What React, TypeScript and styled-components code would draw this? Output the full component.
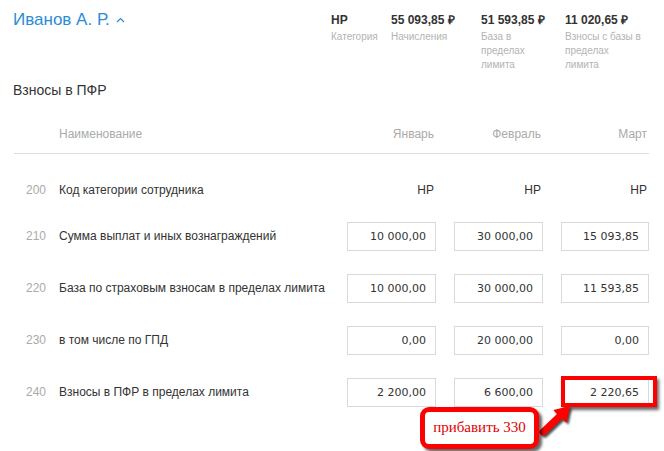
import React from "react";
import styled, { createGlobalStyle } from "styled-components";

const Global = createGlobalStyle`
  html, body { margin: 0; padding: 0; background: #fff; }
  body { font-family: "Liberation Sans", Arial, sans-serif; color: #333; }
`;

const Page = styled.div`
  padding: 9px 15px 0 13px;
  width: 664px;
  height: 451px;
  box-sizing: border-box;
  overflow: hidden;
`;

const Header = styled.div`
  display: flex;
  justify-content: space-between;
  align-items: flex-start;
`;

const Title = styled.div`
  display: flex;
  align-items: center;
  gap: 6px;
  font-size: 17px;
  line-height: 22px;
  color: #2b8cd6;
`;

const Stats = styled.div`
  display: flex;
  margin-top: 3px;
`;

const Stat = styled.div<{ $w: number }>`
  width: ${(p) => p.$w}px;
`;

const StatValue = styled.div`
  font-weight: bold;
  font-size: 12px;
  line-height: 16px;
  color: #333;
  white-space: nowrap;
`;

const StatLabel = styled.div<{ $max: number }>`
  margin-top: 2px;
  font-size: 10px;
  line-height: 14px;
  color: #b3b3b3;
  max-width: ${(p) => p.$max}px;
`;

const SectionTitle = styled.div`
  margin-top: 9px;
  font-size: 14px;
  line-height: 18px;
  color: #333;
`;

const Table = styled.div`
  margin-top: 15px;
  margin-left: 1px;
`;

const HeadRow = styled.div`
  display: flex;
  align-items: center;
  height: 39px;
  border-bottom: 1px solid #dcdcdc;
  color: #aaa;
  font-size: 12px;
`;

const Body = styled.div`
  padding-top: 16px;
`;

const Row = styled.div<{ $h: number }>`
  display: flex;
  align-items: center;
  height: ${(p) => p.$h}px;
  font-size: 12px;
`;

const Num = styled.div`
  width: 32px;
  text-align: right;
  color: #aaa;
`;

const Name = styled.div<{ $muted?: boolean }>`
  flex: 1;
  margin-left: 13px;
  color: ${(p) => (p.$muted ? "#aaa" : "#333")};
`;

const Cell = styled.div<{ $w: number }>`
  position: relative;
  width: ${(p) => p.$w}px;
  margin-left: 18px;
  display: flex;
  justify-content: flex-end;
`;

const CellText = styled.span<{ $muted?: boolean }>`
  padding-right: 2px;
  color: ${(p) => (p.$muted ? "#aaa" : "#333")};
`;

const ValueBox = styled.div`
  width: 100%;
  height: 29px;
  box-sizing: border-box;
  border: 1px solid #d9d9d9;
  padding-right: 9px;
  display: flex;
  align-items: center;
  justify-content: flex-end;
  font-family: "DejaVu Sans", Verdana, sans-serif;
  font-size: 11px;
  color: #333;
`;

const Highlight = styled.div`
  position: absolute;
  left: 0px;
  right: -8px;
  top: -2px;
  bottom: 0;
  border: 4px solid #ff0000;
  box-shadow: 2px 3px 3px rgba(0, 0, 0, 0.6);
  pointer-events: none;
`;

const Callout = styled.div`
  position: absolute;
  left: -141px;
  top: 29px;
  width: 119px;
  height: 42px;
  box-sizing: border-box;
  border: 5px solid #ff0000;
  border-radius: 9px;
  background: #fff;
  box-shadow: 3px 3px 3px rgba(0, 0, 0, 0.6);
  display: flex;
  align-items: center;
  justify-content: center;
  font-family: "Liberation Serif", "Times New Roman", serif;
  font-size: 15px;
  color: #e00000;
  white-space: nowrap;
`;

const ArrowSvg = styled.svg`
  position: absolute;
  left: -21px;
  top: 25px;
  overflow: visible;
  filter: drop-shadow(2px 2px 1px rgba(0, 0, 0, 0.7));
`;

const Caret = () => (
  <svg width="9" height="6" viewBox="0 0 9 6">
    <path d="M1 5 L4.5 1.5 L8 5" fill="none" stroke="#2b8cd6" strokeWidth="1.2" />
  </svg>
);

const Arrow = () => (
  <ArrowSvg width="32" height="34" viewBox="0 0 32 34">
    <line x1="3" y1="29" x2="21" y2="12" stroke="#ff0000" strokeWidth="7" strokeLinecap="round" />
    <polygon points="29,4 26,18.5 14.5,7.5" fill="#ff0000" stroke="#ff0000" strokeWidth="1.5" strokeLinejoin="round" />
  </ArrowSvg>
);

const stats = [
  { v: "НР", l: "Категория", w: 60, m: 60 },
  { v: "55 093,85 ₽", l: "Начисления", w: 90, m: 85 },
  { v: "51 593,85 ₽", l: "База в пределах лимита", w: 84, m: 60 },
  { v: "11 020,65 ₽", l: "Взносы с базы в пределах лимита", w: 84, m: 78 },
];

const widths = [89, 89, 88];

const rows = [
  { n: "210", name: "Сумма выплат и иных вознаграждений", v: ["10 000,00", "30 000,00", "15 093,85"] },
  { n: "220", name: "База по страховым взносам в пределах лимита", v: ["10 000,00", "30 000,00", "11 593,85"] },
  { n: "230", name: "в том числе по ГПД", v: ["0,00", "20 000,00", "0,00"] },
  { n: "240", name: "Взносы в ПФР в пределах лимита", v: ["2 200,00", "6 600,00", "2 220,65"] },
];

export default function App() {
  return (
    <>
      <Global />
      <Page>
        <Header>
          <Title>
            Иванов А. Р.
            <Caret />
          </Title>
          <Stats>
            {stats.map((s) => (
              <Stat key={s.l} $w={s.w}>
                <StatValue>{s.v}</StatValue>
                <StatLabel $max={s.m}>{s.l}</StatLabel>
              </Stat>
            ))}
          </Stats>
        </Header>
        <SectionTitle>Взносы в ПФР</SectionTitle>
        <Table>
          <HeadRow>
            <Num />
            <Name $muted>Наименование</Name>
            {["Январь", "Февраль", "Март"].map((m, i) => (
              <Cell key={m} $w={widths[i]}>
                <CellText $muted>{m}</CellText>
              </Cell>
            ))}
          </HeadRow>
          <Body>
            <Row $h={40}>
              <Num>200</Num>
              <Name>Код категории сотрудника</Name>
              {widths.map((w, i) => (
                <Cell key={i} $w={w}>
                  <CellText>НР</CellText>
                </Cell>
              ))}
            </Row>
            {rows.map((r, ri) => (
              <Row key={r.n} $h={52}>
                <Num>{r.n}</Num>
                <Name>{r.name}</Name>
                {r.v.map((v, i) => (
                  <Cell key={i} $w={widths[i]}>
                    <ValueBox>{v}</ValueBox>
                    {ri === rows.length - 1 && i === 2 && (
                      <>
                        <Highlight />
                        <Arrow />
                        <Callout>прибавить 330</Callout>
                      </>
                    )}
                  </Cell>
                ))}
              </Row>
            ))}
          </Body>
        </Table>
      </Page>
    </>
  );
}
